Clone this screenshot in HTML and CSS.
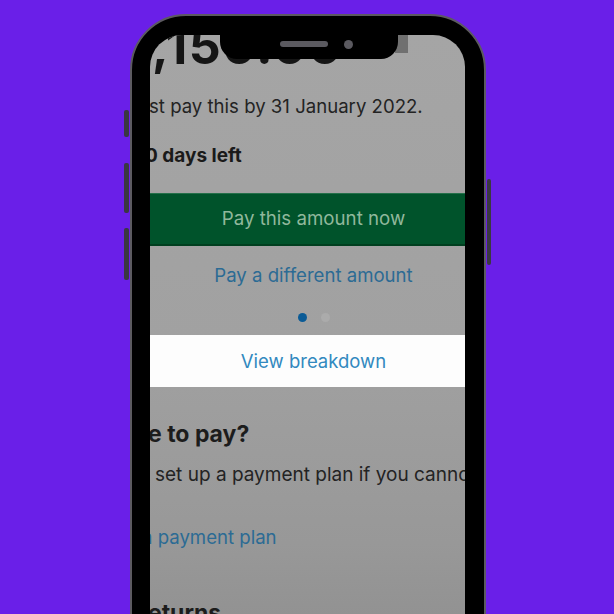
FILE: index.html
```html
<!DOCTYPE html>
<html lang="en">
<head>
<meta charset="utf-8">
<title>Pay your tax bill</title>
<link rel="stylesheet" href="styles.css">
</head>
<body>
<div class="stage">
  <div class="phone">
    <span class="side-btn mute"></span>
    <span class="side-btn vol-up"></span>
    <span class="side-btn vol-down"></span>
    <span class="side-btn power"></span>
    <div class="screen">
      <div class="status-block"></div>
      <div class="amount">,150.00</div>
      <p class="line due">st pay this by 31 January 2022.</p>
      <p class="line days">0 days left</p>
      <div class="pay-btn">Pay this amount now</div>
      <div class="link-row">Pay a different amount</div>
      <div class="dots"><span class="dot active"></span><span class="dot"></span></div>
      <div class="breakdown">View breakdown</div>
      <h2 class="heading ask">e to pay?</h2>
      <p class="line plan-text">set up a payment plan if you cannot pay in full</p>
      <p class="line plan-link">a payment plan</p>
      <h2 class="heading returns">eturns</h2>
    </div>
    <div class="notch"><span class="speaker"></span><span class="camera"></span></div>
  </div>
</div>
</body>
</html>
```
FILE: styles.css
```css
html, body {
  margin: 0;
  padding: 0;
}
body {
  background: #6a1fe8;
  height: 614px;
  overflow: hidden;
  font-family: "Inter", "Noto Sans", "Liberation Sans", sans-serif;
}
.stage {
  padding-top: 14px;
  padding-left: 130px;
}
.phone {
  position: relative;
  width: 356px;
  height: 720px;
  box-sizing: border-box;
  border: 2px solid #5c5a60;
  background: #000;
  border-radius: 56px;
  padding: 19px 19px 19px 18px;
}
.side-btn {
  position: absolute;
  width: 5px;
  background: #3a3842;
  border-radius: 2px;
}
.mute { left: -8px; top: 94px; height: 27px; }
.vol-up { left: -8px; top: 147px; height: 50px; }
.vol-down { left: -8px; top: 212px; height: 52px; }
.power { right: -7px; top: 163px; height: 86px; width: 4px; }

.notch {
  position: absolute;
  left: 88px;
  top: 0;
  width: 178px;
  height: 43px;
  background: #000;
  border-radius: 0 0 17px 17px;
}
.speaker {
  position: absolute;
  left: 60px;
  top: 25px;
  width: 48px;
  height: 6px;
  border-radius: 3px;
  background: #5b5a60;
}
.camera {
  position: absolute;
  left: 124px;
  top: 24px;
  width: 9px;
  height: 9px;
  border-radius: 50%;
  background: #5b5a60;
}
.status-block {
  position: absolute;
  left: 245px;
  top: 0;
  width: 13px;
  height: 18px;
  background: #707070;
}

.screen {
  position: relative;
  height: 100%;
  border-radius: 32px 32px 0 0;
  overflow: hidden;
  background: linear-gradient(#a5a5a5 0%, #a1a1a1 45%, #989898 75%, #8a8a8a 100%);
  color: #232323;
}
.amount {
  font-size: 50px;
  font-weight: 700;
  line-height: 46px;
  margin: -12px 0 0 2px;
  letter-spacing: 1.5px;
  white-space: nowrap;
  color: #151515;
}
.line {
  margin: 0;
  font-size: 18.6px;
  line-height: 24px;
  white-space: nowrap;
}
.due {
  margin-top: 25px;
  margin-left: -1px;
}
.days {
  margin-top: 26px;
  margin-left: -5px;
  font-size: 19px;
  font-weight: 700;
  color: #1a1a1a;
}
.pay-btn {
  margin-top: 25px;
  height: 53px;
  box-sizing: border-box;
  border-top: 1px solid #24704a;
  border-bottom: 2px solid #003f1f;
  background: #00532b;
  color: #90b89c;
  font-size: 18.7px;
  line-height: 50px;
  text-align: center;
  padding-left: 12px;
}
.link-row {
  margin-top: 17px;
  font-size: 18.6px;
  line-height: 24px;
  color: #2c6b94;
  text-align: center;
  padding-left: 12px;
}
.dots {
  margin-top: 26px;
  height: 9px;
  display: flex;
  justify-content: center;
  gap: 14px;
  padding-left: 12px;
}
.dot {
  width: 9px;
  height: 9px;
  border-radius: 50%;
  background: #ababab;
}
.dot.active {
  background: #0b5b96;
}
.breakdown {
  margin-top: 13px;
  height: 52px;
  background: #fdfdfd;
  color: #3289bf;
  font-size: 18.5px;
  line-height: 52px;
  text-align: center;
  padding-left: 12px;
}
.heading {
  margin: 0;
  font-size: 23px;
  line-height: 28px;
  font-weight: 700;
  color: #1c1c1c;
  white-space: nowrap;
}
.ask {
  margin-top: 33px;
  margin-left: -2px;
}
.plan-text {
  margin-top: 15px;
  margin-left: 5px;
  font-size: 19px;
}
.plan-link {
  margin-top: 38px;
  margin-left: -8px;
  color: #2c6b94;
}
.returns {
  margin-top: 50px;
  margin-left: -2px;
}
```
